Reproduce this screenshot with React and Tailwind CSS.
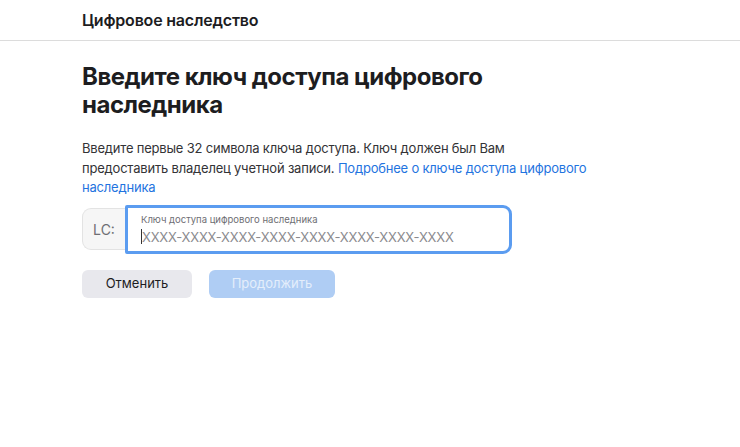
import React from 'react';

const App = () => {
    return (
        <div className="min-h-[447px] bg-white text-[#1d1d1f]" style={{ fontFamily: '"Inter", "Noto Sans", sans-serif' }}>
            {/* Header */}
            <div className="h-[41px] border-b border-[#dcdcdc] flex items-center px-[82px]">
                <span className="text-[16px] font-semibold tracking-[-0.2px] text-[#1d1d1f]">Цифровое наследство</span>
            </div>

            <div className="px-[82px] pt-[22px]">
                <h1 className="text-[24px] leading-[28px] font-bold tracking-[-0.5px] w-[440px]">
                    Введите ключ доступа цифрового наследника
                </h1>

                <p className="mt-[20px] text-[13px] leading-[19.5px] tracking-[-0.2px] text-[#333336] w-[540px]">
                    Введите первые 32 символа ключа доступа. Ключ должен был Вам<br />
                    предоставить владелец учетной записи.{' '}
                    <a href="#" className="text-[#1f74e0]">Подробнее о ключе доступа цифрового<br />наследника</a>
                </p>

                {/* Key input */}
                <div className="mt-[7px] flex items-center">
                    <div className="w-[43px] h-[42px] flex items-center justify-center bg-[#f6f6f6] border border-[#e3e3e3] border-r-0 rounded-l-[9px] text-[14px] text-[#6e6e73]">
                        LC:
                    </div>
                    <div className="w-[387px] h-[49px] border-[3px] border-[#5b9cf0] rounded-r-[9px] rounded-l-[2px] bg-white flex flex-col justify-center pl-[13px]">
                        <span className="text-[9.5px] leading-[11px] text-[#6e6e73]">Ключ доступа цифрового наследника</span>
                        <div className="flex items-center mt-[4px]">
                            <span className="w-px h-[15px] bg-[#333]" />
                            <span className="text-[13px] leading-[16px] tracking-[-0.2px] text-[#8a8a8e]">XXXX-XXXX-XXXX-XXXX-XXXX-XXXX-XXXX-XXXX</span>
                        </div>
                    </div>
                </div>

                {/* Buttons */}
                <div className="mt-[16px] flex gap-[17px]">
                    <button className="w-[110px] h-[28px] rounded-[6px] bg-[#e8e8ed] text-[13px] text-[#1d1d1f]">
                        Отменить
                    </button>
                    <button className="w-[126px] h-[28px] rounded-[6px] bg-[#afcdf4] text-[13px] text-[#e4eefb]">
                        Продолжить
                    </button>
                </div>
            </div>
        </div>
    );
};

export default App;
